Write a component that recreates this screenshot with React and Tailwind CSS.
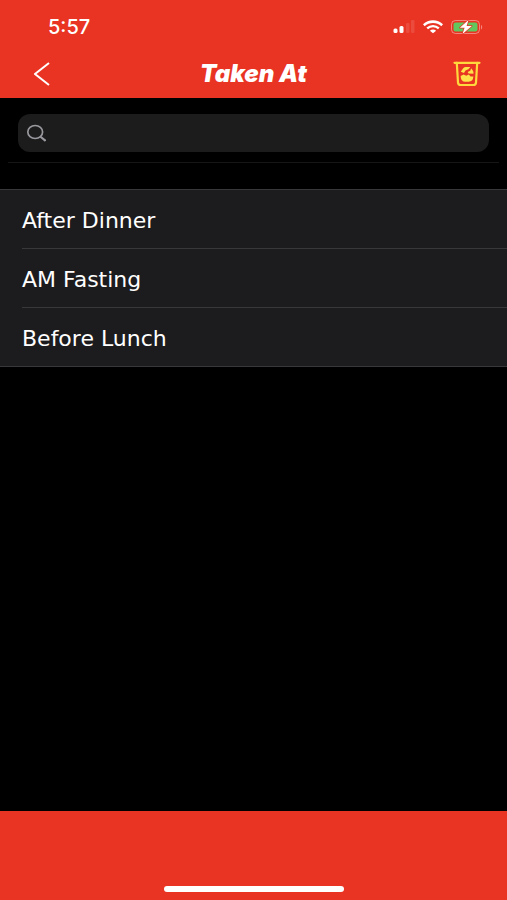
import { useState } from 'react';

const READINGS = ['After Dinner', 'AM Fasting', 'Before Lunch'];

const StatusBar = () => (
  <div className="flex h-[50px] items-center justify-between pt-1 pr-6 pl-12 text-white">
    <span className="font-['Inter',sans-serif] text-[20px] leading-6 font-medium">5:57</span>
    <div className="flex items-center gap-2">
      <svg className="h-4 w-[22px]" viewBox="0 0 22 16" fill="currentColor" aria-hidden="true">
        <rect x="0.5" y="9.5" width="4" height="4.5" rx="1.5" />
        <rect x="6.5" y="7" width="4" height="7" rx="1.5" />
        <rect x="13" y="4" width="3.5" height="10" rx="1.2" opacity="0.12" />
        <rect x="18" y="1" width="3.5" height="13" rx="1.2" opacity="0.12" />
      </svg>
      <svg className="h-4 w-5" viewBox="0 0 20 16" fill="none" stroke="currentColor" aria-hidden="true">
        <path d="M0.8 6.2C6 1.4 14 1.4 19.2 6.2" strokeWidth="2.6" />
        <path d="M4.2 9.4C7.6 6.4 12.4 6.4 15.8 9.4" strokeWidth="2.4" />
        <path d="M10 14.3 6.9 11.7C8.7 10.2 11.3 10.2 13.1 11.7Z" fill="currentColor" stroke="none" />
      </svg>
      <svg className="h-4 w-8" viewBox="0 0 32 16" aria-hidden="true">
        <rect x="0.5" y="1.5" width="28" height="13" rx="4" fill="none" stroke="#fff" strokeOpacity="0.4" />
        <rect x="2.5" y="3.5" width="24" height="9" rx="2" fill="#5fc75d" />
        <path d="M30 6v4.5c1.6-.6 1.6-3.9 0-4.5Z" fill="#fff" fillOpacity="0.4" />
        <path
          d="M17.5 1 8.8 8.8h4.8L11.5 15 20.8 7h-5.2Z"
          fill="#fff"
          stroke="#e93323"
          strokeWidth="1.4"
          paintOrder="stroke"
          strokeLinejoin="round"
        />
      </svg>
    </div>
  </div>
);

const BinIcon = () => (
  <svg className="h-7 w-7" viewBox="0 0 28 28" fill="none" stroke="#ffd83d" strokeWidth="2.2" strokeLinecap="round" strokeLinejoin="round" aria-hidden="true">
    <path d="M1.5 2.8h25" />
    <path d="M3.8 2.8 5 22.6Q5.2 25 7.6 25h12.8q2.4 0 2.6-2.4L24.2 2.8" />
    <g fill="#ffe14a" stroke="none">
      <path d="M7.8 11.8 10.2 8.2Q11.200 7 13 7H17.400L15.400 9.200 12.500 10.500 11 13Z" />
      <path d="M18.200 8.200 19.600 10.200Q21 12 20.400 13.800L15.600 13.600 14.600 12 17.200 10.800Z" />
      <path d="M7.600 16 10.600 14.600 13.200 15.800 15.800 14.600 17.600 16.400 20.400 16.600Q20 21.800 15.500 21.800H12Q8 21.800 7.600 16Z" />
    </g>
  </svg>
);

const App = () => {
  const [query, setQuery] = useState('');
  const visible = READINGS.filter((name) => name.toLowerCase().includes(query.toLowerCase()));

  return (
    <div className="flex min-h-screen flex-col bg-black">
      <header className="bg-[#e93323]">
        <StatusBar />
        <nav className="grid h-12 grid-cols-3 items-center px-[26px]">
          <button type="button" aria-label="Back" className="flex h-8 w-8 items-center justify-center text-white">
            <svg className="h-6 w-4" viewBox="0 0 16 24" fill="none" stroke="currentColor" strokeWidth="2" aria-hidden="true">
              <path d="M15 1 1 12l14 11" />
            </svg>
          </button>
          <h1 className="text-center font-['Inter',sans-serif] text-[24px] leading-6 font-black whitespace-nowrap text-white italic">
            Taken At
          </h1>
          <button type="button" aria-label="Delete" className="justify-self-end">
            <BinIcon />
          </button>
        </nav>
      </header>

      <main className="flex-1">
        <div className="mx-2 border-b border-[#161616] px-[10px] pt-4 pb-[10px]">
          <label className="flex h-[38px] items-center gap-2 rounded-xl bg-[#1c1c1d] px-2">
            <svg className="h-5 w-5 shrink-0 text-[#98989d]" viewBox="0 0 20 20" fill="none" stroke="currentColor" aria-hidden="true">
              <ellipse cx="9.2" cy="9" rx="7.4" ry="6.5" strokeWidth="1.7" />
              <path d="m14.2 13.5 5.4 4.3" strokeWidth="2.2" />
            </svg>
            <input
              type="search"
              aria-label="Search"
              value={query}
              onChange={(e) => setQuery(e.target.value)}
              className="w-full bg-transparent text-white outline-none"
            />
          </label>
        </div>

        <ul className="mt-[26px] border-y border-[#38383a] bg-[#1c1c1e] pl-[22px]">
          {visible.map((name) => (
            <li key={name} className="border-b border-[#38383a] last:border-b-0">
              <button
                type="button"
                className="flex h-[58px] w-full items-center pt-1 text-left font-['DejaVu_Sans',sans-serif] text-[22px] leading-6 text-white"
              >
                {name}
              </button>
            </li>
          ))}
        </ul>
      </main>

      <footer className="flex h-[89px] items-end justify-center bg-[#e93323] pb-2">
        <div className="h-[6px] w-[180px] rounded-full bg-white" />
      </footer>
    </div>
  );
};

export default App;
